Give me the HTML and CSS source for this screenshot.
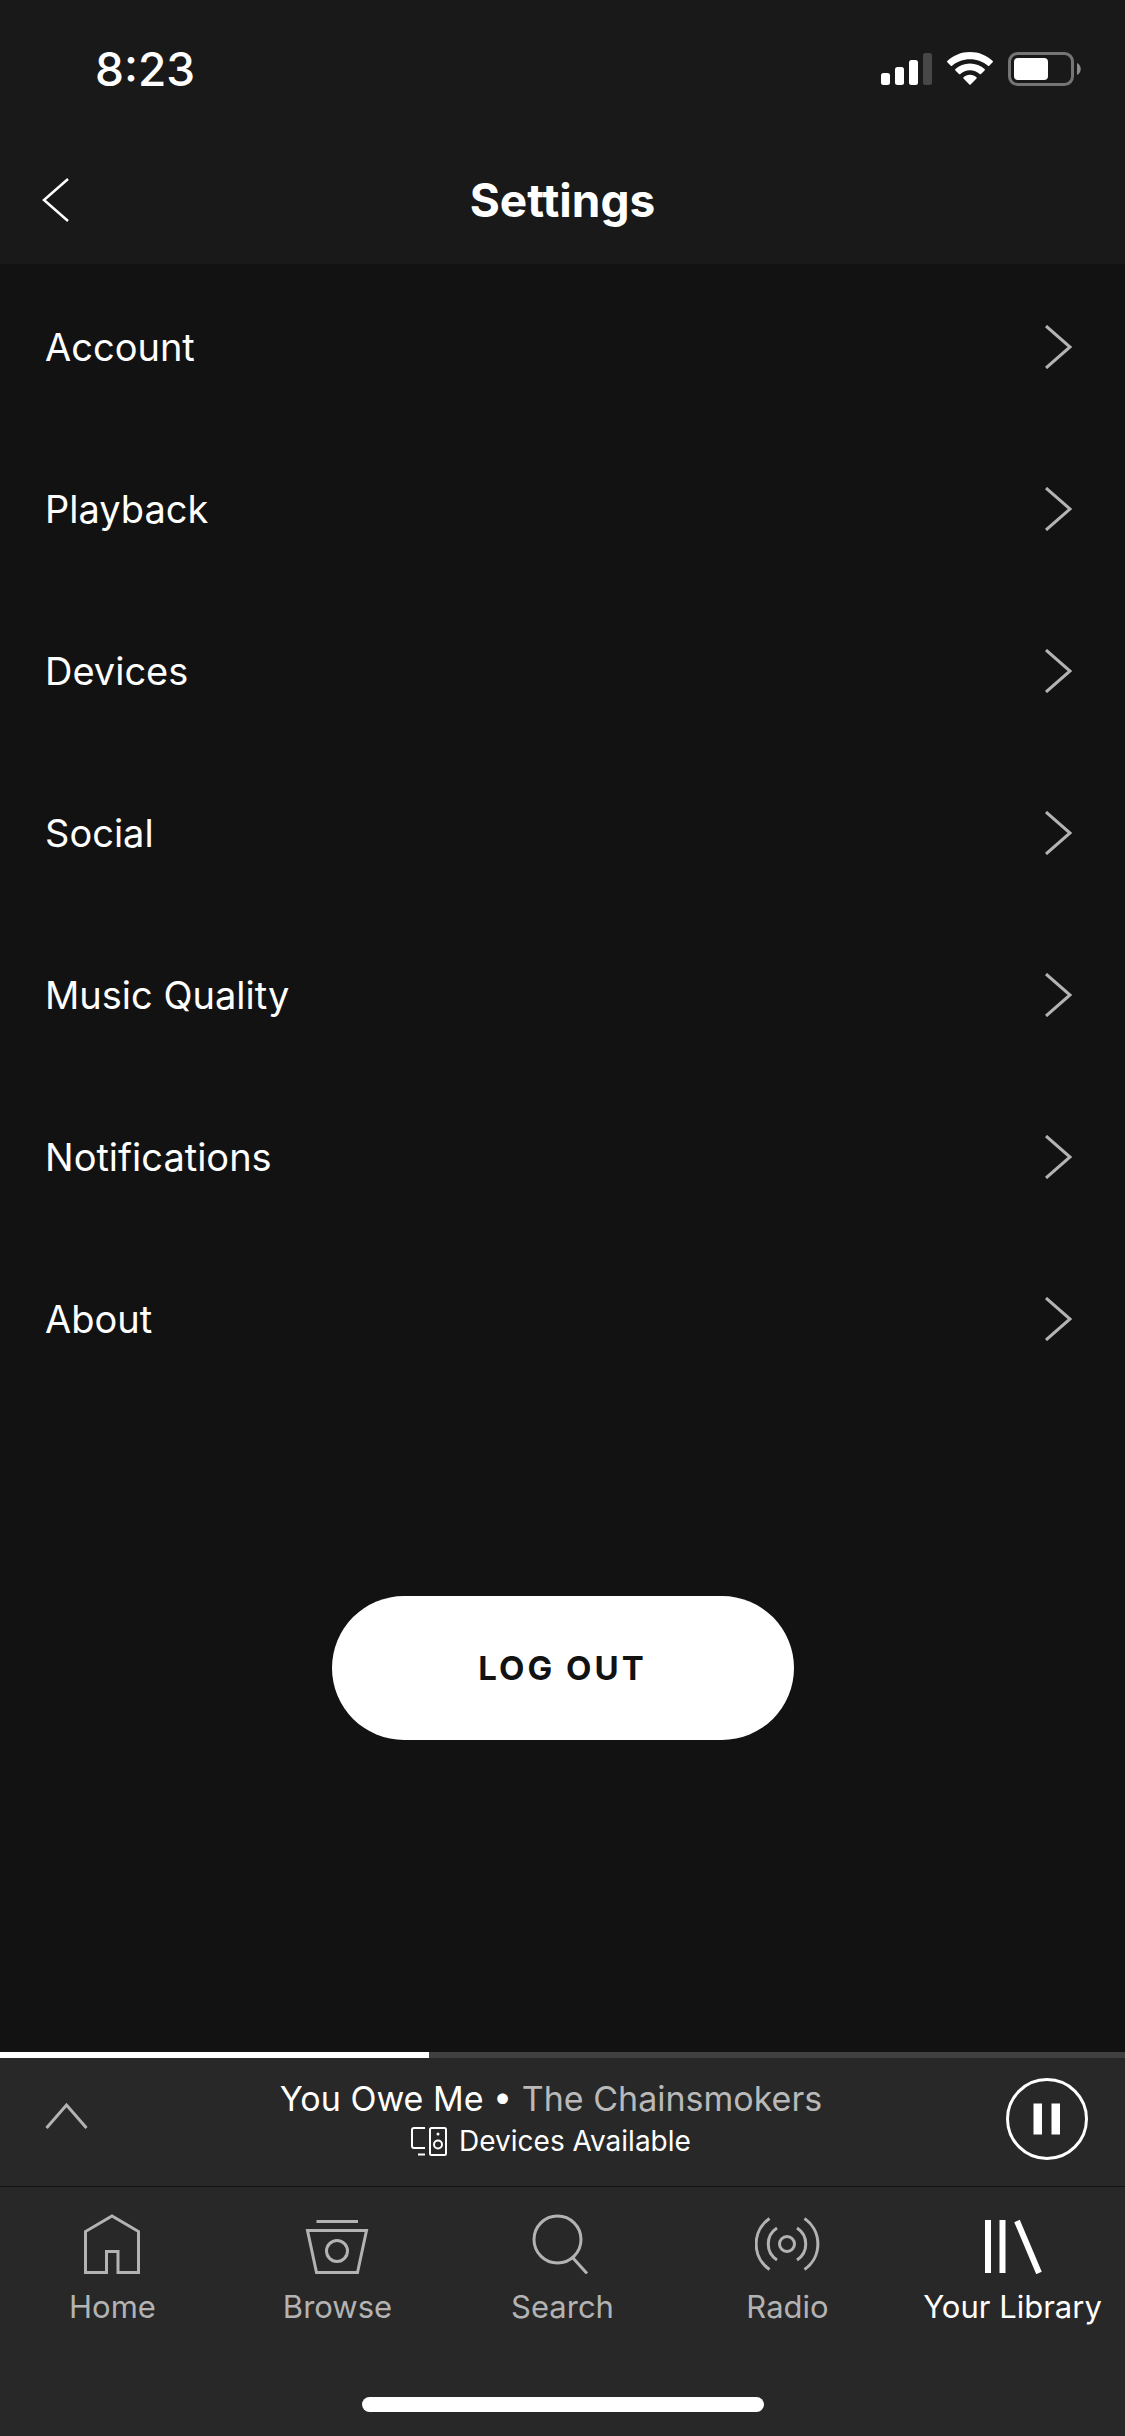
FILE: index.html
```html
<!DOCTYPE html>
<html lang="en">
<head>
    <meta charset="UTF-8">
    <meta name="viewport" content="width=device-width, initial-scale=1.0">
    <title>Settings</title>
    <link rel="stylesheet" href="styles.css">
</head>
<body>

    <header class="header">
        <div class="status-bar">
            <span class="time">8:23</span>
            <div class="status-icons">
                <svg width="51" height="34" viewBox="0 0 51 34" fill="#fff">
                    <rect x="0" y="21" width="9" height="12" rx="2.5"/>
                    <rect x="14" y="15" width="9" height="18" rx="2.5"/>
                    <rect x="28" y="8" width="9" height="25" rx="2.5"/>
                    <rect x="42" y="1" width="9" height="32" rx="2.5" fill="#474747"/>
                </svg>
                <svg width="46" height="34" viewBox="0 0 46 34" fill="#fff">
                    <path d="M23 0C14.200 0 6.200 3.400 .3 8.900c-.4.400-.4.900 0 1.300l3.500 3.600c.4.400.9.400 1.300 0C9.800 9.600 16.100 7.200 23 7.200s13.200 2.400 17.900 6.600c.4.400.9.400 1.300 0l3.500-3.600c.4-.4.4-.9 0-1.300C39.800 3.400 31.800 0 23 0z"/>
                    <path d="M23 11.400c-5.700 0-10.800 2.200-14.600 5.700-.4.400-.4.900 0 1.300l3.600 3.600c.4.400.9.400 1.300 0 2.600-2.300 6-3.700 9.700-3.700s7.100 1.400 9.700 3.700c.4.400.9.400 1.300 0l3.600-3.600c.4-.4.4-.9 0-1.300-3.800-3.500-8.900-5.700-14.600-5.700z"/>
                    <path d="M23 22.700c-2.500 0-4.800 1-6.500 2.500-.4.400-.4.900 0 1.300l5.900 6c.3.400.9.400 1.200 0l5.900-6c.4-.4.4-.9 0-1.300-1.700-1.500-4-2.500-6.500-2.500z"/>
                </svg>
                <svg width="73" height="34" viewBox="0 0 73 34">
                    <rect x="1.500" y="1.500" width="63" height="31" rx="8" fill="none" stroke="#757575" stroke-width="3"/>
                    <rect x="6" y="6" width="34" height="22" rx="4" fill="#fff"/>
                    <path d="M69 11c5 2 5 10 0 12z" fill="#8c8c8c"/>
                </svg>
            </div>
        </div>
        <div class="nav-bar">
            <button class="icon-button" aria-label="Back">
                <svg width="27" height="44" viewBox="0 0 27 44" fill="none" stroke="#fff" stroke-width="2.500"><path d="M26 1L2 22l24 21"/></svg>
            </button>
            <h1>Settings</h1>
        </div>
    </header>

    <main>
        <ul class="settings-list">
            <li><a href="#">Account <svg class="arrow" viewBox="0 0 27 44"><path d="M1 1l24 21L1 43"/></svg></a></li>
            <li><a href="#">Playback <svg class="arrow" viewBox="0 0 27 44"><path d="M1 1l24 21L1 43"/></svg></a></li>
            <li><a href="#">Devices <svg class="arrow" viewBox="0 0 27 44"><path d="M1 1l24 21L1 43"/></svg></a></li>
            <li><a href="#">Social <svg class="arrow" viewBox="0 0 27 44"><path d="M1 1l24 21L1 43"/></svg></a></li>
            <li><a href="#">Music Quality <svg class="arrow" viewBox="0 0 27 44"><path d="M1 1l24 21L1 43"/></svg></a></li>
            <li><a href="#">Notifications <svg class="arrow" viewBox="0 0 27 44"><path d="M1 1l24 21L1 43"/></svg></a></li>
            <li><a href="#">About <svg class="arrow" viewBox="0 0 27 44"><path d="M1 1l24 21L1 43"/></svg></a></li>
        </ul>
        <button class="logout">LOG OUT</button>
    </main>

    <footer class="footer">
        <div class="progress"><div class="progress-fill" style="width: 38.1%;"></div></div>

        <div class="player">
            <button class="icon-button" aria-label="Expand player">
                <svg width="43" height="34" viewBox="0 0 43 34" fill="none" stroke="#b3b3b3" stroke-width="3"><path d="M1.500 26L21.500 3l20 23"/></svg>
            </button>
            <div class="now-playing">
                <p class="track">You Owe Me • <span class="artist">The Chainsmokers</span></p>
                <button class="devices">
                    <svg width="36" height="30" viewBox="0 0 36 30" fill="none" stroke="#fff" stroke-width="2">
                        <path d="M14 2H3q-2 0-2 2v16q0 2 2 2h11M7 28.500h7"/>
                        <rect x="19" y="2" width="16" height="27" rx="1.500"/>
                        <circle cx="27" cy="18.500" r="4"/>
                        <circle cx="27" cy="8" r="1.500" fill="#fff" stroke="none"/>
                    </svg>
                    Devices Available
                </button>
            </div>
            <button class="icon-button" aria-label="Pause">
                <svg width="82" height="82" viewBox="0 0 82 82">
                    <circle cx="41" cy="41" r="39.500" fill="none" stroke="#fff" stroke-width="3"/>
                    <path d="M27.500 25.500h8.500v31h-8.500zM45.500 25.500h8.500v31h-8.500z" fill="#fff"/>
                </svg>
            </button>
        </div>

        <nav class="tabs">
            <a href="#" class="tab">
                <svg viewBox="1 0 66 60"><path d="M6.500 58.500v-41L33 2l26.500 15.500v41H39v-21H27.500v21z"/></svg>
                Home
            </a>
            <a href="#" class="tab">
                <svg viewBox="1 0 66 60"><path d="M12.500 7.500h41.500M3.500 16.500h59l-9 42h-41z"/><circle cx="33" cy="37" r="10.500"/></svg>
                Browse
            </a>
            <a href="#" class="tab">
                <svg viewBox="1 0 66 60"><circle cx="28.500" cy="25.500" r="23.500"/><path d="M44 44l14 15.500"/></svg>
                Search
            </a>
            <a href="#" class="tab">
                <svg viewBox="1 0 66 60"><circle cx="33" cy="30" r="7.500"/><path d="M23 14a19 19 0 0 0 0 32M43 14a19 19 0 0 1 0 32M15.500 4.500a31 31 0 0 0 0 51M50.500 4.500a31 31 0 0 1 0 51"/></svg>
                Radio
            </a>
            <a href="#" class="tab active">
                <svg viewBox="1 0 66 60"><path d="M9 6v53M23.500 6v53M38 7l22 52"/></svg>
                Your Library
            </a>
        </nav>
        <div class="home-indicator"></div>
    </footer>

</body>
</html>
```
FILE: styles.css
```css
* {
    box-sizing: border-box;
    margin: 0;
    padding: 0;
}
body {
    display: flex;
    flex-direction: column;
    min-height: 100vh;
    background-color: #121212;
    color: #fff;
    font-family: Inter, "Liberation Sans", sans-serif;
}
a {
    color: inherit;
    text-decoration: none;
}
button {
    border: none;
    background: none;
    color: inherit;
    font-family: inherit;
    cursor: pointer;
}
svg {
    display: block;
}
.header {
    background-color: #191919;
}
.status-bar {
    display: flex;
    justify-content: space-between;
    align-items: center;
    height: 138px;
    padding: 0 44px 0 95px;
}
.time {
    font-size: 46px;
    font-weight: 500;
}
.status-icons {
    display: flex;
    gap: 15px;
}
.nav-bar {
    display: grid;
    grid-template-columns: 1fr auto 1fr;
    align-items: center;
    height: 126px;
    padding: 0 42px 3px;
}
.nav-bar h1 {
    font-size: 46px;
    font-weight: 700;
    line-height: 56px;
}
.icon-button {
    justify-self: start;
}
.settings-list {
    list-style: none;
    padding-top: 2px;
}
.settings-list a {
    display: flex;
    justify-content: space-between;
    align-items: center;
    height: 162px;
    padding: 0 53px 0 45px;
    font-size: 38px;
}
.arrow {
    width: 27px;
    height: 44px;
    fill: none;
    stroke: #b3b3b3;
    stroke-width: 3;
}
.logout {
    display: block;
    width: 462px;
    height: 144px;
    margin: 196px auto;
    border-radius: 72px;
    background-color: #fff;
    color: #121212;
    font-size: 33px;
    font-weight: 700;
    letter-spacing: 3px;
}
.footer {
    margin-top: auto;
    background-color: #282828;
}
.progress {
    height: 6px;
    background-color: #404040;
}
.progress-fill {
    height: 100%;
    background-color: #fff;
}
.player {
    display: grid;
    grid-template-columns: 51px 1fr auto;
    align-items: center;
    height: 129px;
    padding: 0 37px 6px 45px;
    border-bottom: 1px solid #121212;
}
.now-playing {
    display: flex;
    flex-direction: column;
    align-items: center;
}
.track {
    font-size: 34px;
    line-height: 44px;
}
.artist {
    color: #b9b9b9;
}
.devices {
    display: flex;
    align-items: center;
    gap: 12px;
    font-size: 28px;
    line-height: 40px;
}
.tabs {
    display: grid;
    grid-template-columns: repeat(5, 1fr);
    padding-top: 27px;
}
.tab {
    display: flex;
    flex-direction: column;
    align-items: center;
    gap: 13px;
    color: #b3b3b3;
    font-size: 31px;
    line-height: 40px;
    white-space: nowrap;
}
.tab svg {
    width: 66px;
    height: 60px;
    fill: none;
    stroke: #b3b3b3;
    stroke-width: 3;
}
.tab.active {
    color: #fff;
}
.tab.active svg {
    stroke: #fff;
    stroke-width: 6;
}
.home-indicator {
    width: 402px;
    height: 15px;
    margin: 70px auto 24px;
    border-radius: 8px;
    background-color: #fff;
}
```
